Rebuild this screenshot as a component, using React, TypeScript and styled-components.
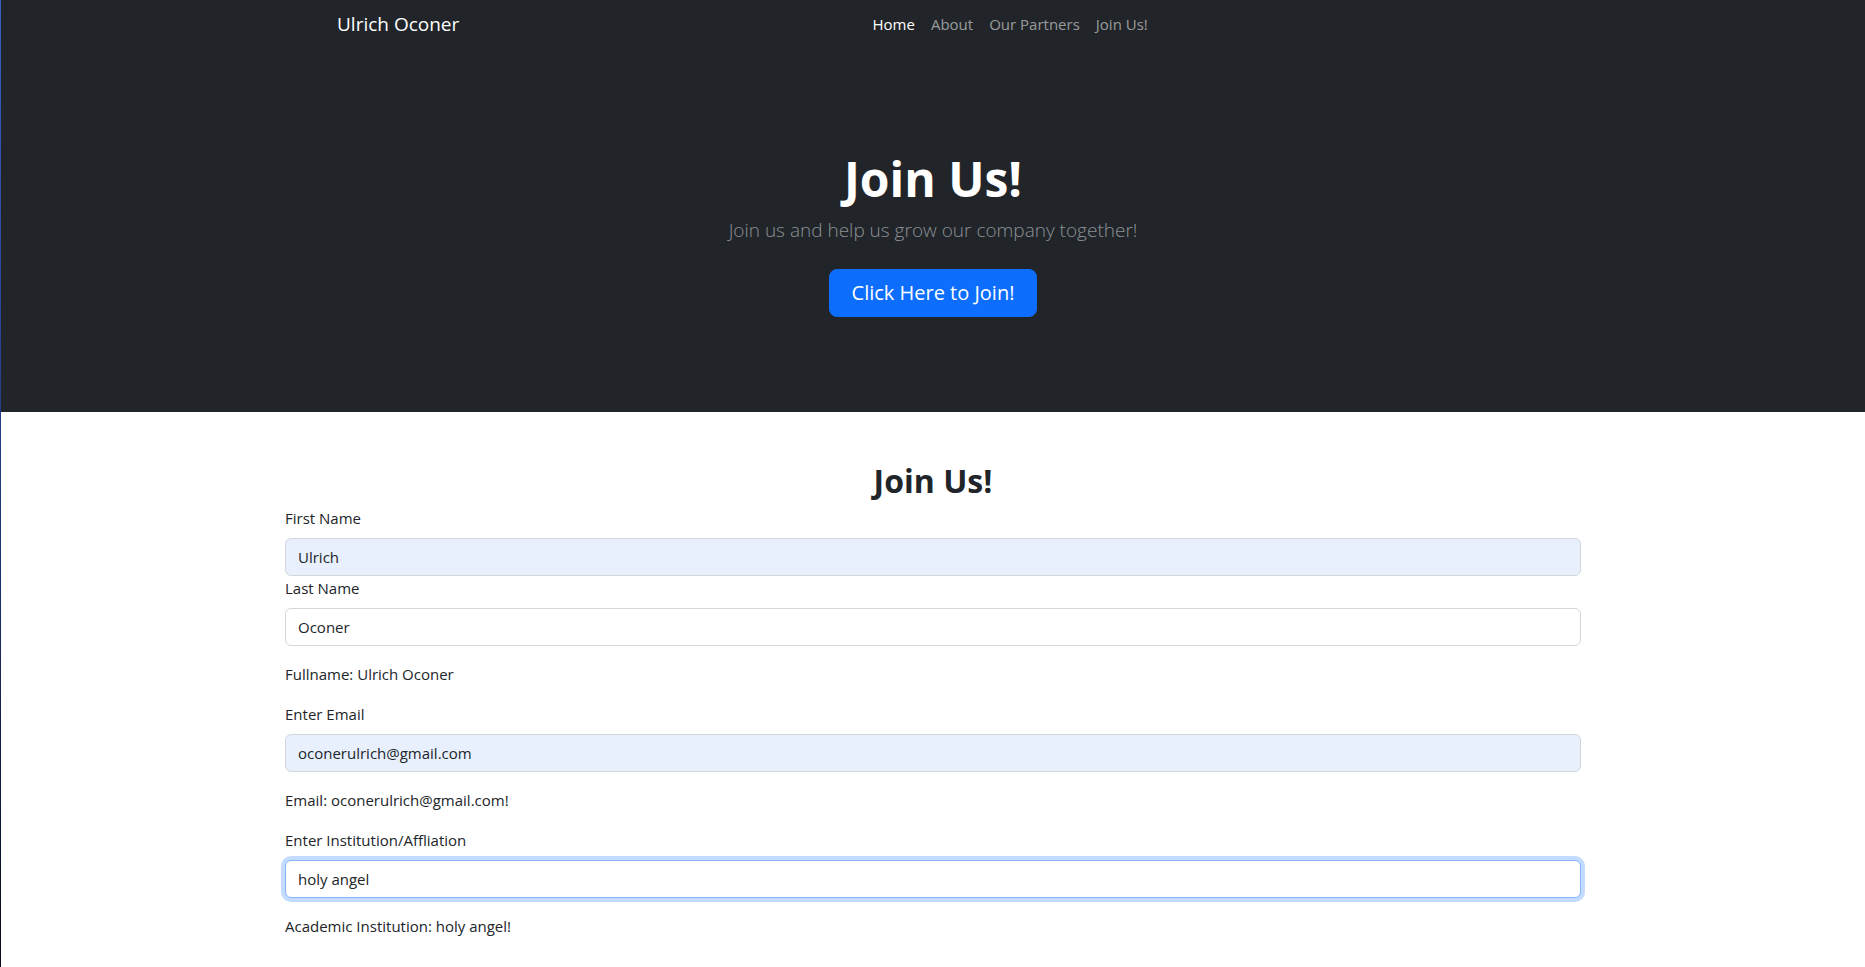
import React from "react";
import styled, { createGlobalStyle, css } from "styled-components";

const GlobalStyle = createGlobalStyle`
  *, *::before, *::after { box-sizing: border-box; }
  html, body { margin: 0; padding: 0; }
  body {
    font-family: "Open Sans", "Noto Sans", Arial, sans-serif;
    font-size: 16px;
    line-height: 1.5;
    color: #212529;
    background: #ffffff;
    border-left: 1px solid transparent;
    border-image: linear-gradient(#3a5fc4, #1d3272 55%, #05070d) 1;
  }
`;

const Header = styled.header`
  background: #212529;
`;

const Navbar = styled.nav`
  height: 48px;
  display: flex;
  align-items: center;
  padding: 0 320px 0 336px;
`;

const Brand = styled.a`
  font-size: 19px;
  line-height: 30px;
  color: #ffffff;
  text-decoration: none;
  margin-right: 16px;
`;

const NavList = styled.ul`
  display: flex;
  list-style: none;
  margin: 0 auto;
  padding: 0;
`;

const NavLink = styled.a<{ $active?: boolean }>`
  display: block;
  padding: 8px;
  font-size: 15px;
  line-height: 24px;
  text-decoration: none;
  color: ${(p) => (p.$active ? "#ffffff" : "rgba(255, 255, 255, 0.55)")};
`;

const Hero = styled.section`
  padding: 102px 24px 95px;
  text-align: center;
`;

const HeroTitle = styled.h1`
  margin: 0 0 7px;
  font-size: 48px;
  line-height: 1.2;
  font-weight: 700;
  color: #ffffff;
`;

const Lead = styled.p`
  margin: 0 0 24px;
  font-size: 19px;
  line-height: 30px;
  font-weight: 300;
  color: #8b9096;
`;

const JoinButton = styled.button`
  height: 48px;
  padding: 8px 22px;
  font-family: inherit;
  font-size: 20px;
  line-height: 30px;
  color: #ffffff;
  background: #0d6efd;
  border: 1px solid #0d6efd;
  border-radius: 8px;
  cursor: pointer;
`;

const Container = styled.main`
  max-width: 1320px;
  margin: 0 auto;
  padding: 50px 12px 48px;
`;

const FormTitle = styled.h2`
  margin: 0 0 6px;
  font-size: 32px;
  line-height: 1.2;
  font-weight: 700;
  text-align: center;
  color: #212529;
`;

const Field = styled.div`
  display: flex;
  flex-direction: column;
`;

const Label = styled.label`
  display: block;
  margin-bottom: 8px;
  font-size: 15px;
  line-height: 24px;
`;

const Input = styled.input<{ $autofill?: boolean; $focused?: boolean }>`
  display: block;
  width: 100%;
  height: 38px;
  padding: 6px 12px;
  font-family: inherit;
  font-size: 15px;
  line-height: 24px;
  color: #212529;
  background: ${(p) => (p.$autofill ? "#e8f0fe" : "#ffffff")};
  border: 1px solid #d3d7db;
  border-radius: 6px;
  outline: none;
  ${(p) =>
    p.$focused &&
    css`
      border-color: #86b7fe;
      box-shadow: 0 0 0 4px rgba(13, 110, 253, 0.25);
    `}
`;

const Output = styled.p`
  margin: 16px 0;
  font-size: 15px;
  line-height: 24px;
`;

export default function App() {
  return (
    <>
      <GlobalStyle />
      <Header>
        <Navbar>
          <Brand href="#">Ulrich Oconer</Brand>
          <NavList>
            <li><NavLink $active href="#">Home</NavLink></li>
            <li><NavLink href="#">About</NavLink></li>
            <li><NavLink href="#">Our Partners</NavLink></li>
            <li><NavLink href="#">Join Us!</NavLink></li>
          </NavList>
        </Navbar>
        <Hero>
          <HeroTitle>Join Us!</HeroTitle>
          <Lead>Join us and help us grow our company together!</Lead>
          <JoinButton type="button">Click Here to Join!</JoinButton>
        </Hero>
      </Header>
      <Container>
        <FormTitle>Join Us!</FormTitle>
        <Field>
          <Label htmlFor="first">First Name</Label>
          <Input id="first" $autofill defaultValue="Ulrich" />
        </Field>
        <Field>
          <Label htmlFor="last">Last Name</Label>
          <Input id="last" defaultValue="Oconer" />
        </Field>
        <Output>Fullname: Ulrich Oconer</Output>
        <Field>
          <Label htmlFor="email">Enter Email</Label>
          <Input id="email" $autofill defaultValue="oconerulrich@gmail.com" />
        </Field>
        <Output>Email: oconerulrich@gmail.com!</Output>
        <Field>
          <Label htmlFor="inst">Enter Institution/Affliation</Label>
          <Input id="inst" $focused defaultValue="holy angel" />
        </Field>
        <Output>Academic Institution: holy angel!</Output>
      </Container>
    </>
  );
}
